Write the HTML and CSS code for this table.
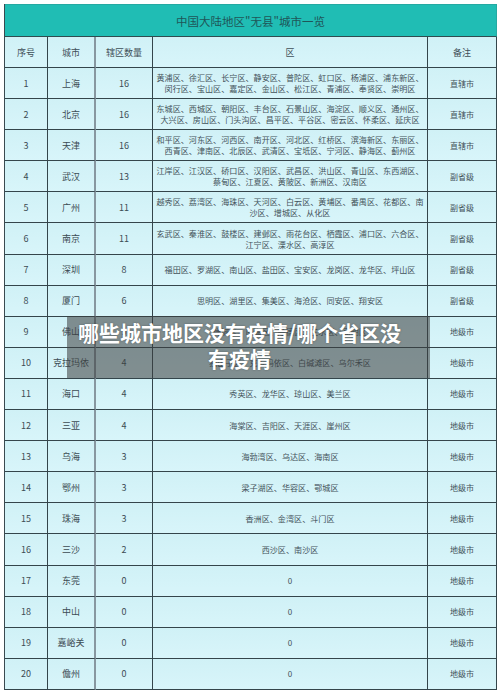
FILE: index.html
```html
<!DOCTYPE html>
<html lang="zh-CN">
<head>
<meta charset="utf-8">
<title>中国大陆地区"无县"城市一览</title>
<link rel="stylesheet" href="styles.css">
</head>
<body>
<div class="wrap">
  <div class="tbl">
    <div class="title">中国大陆地区"无县"城市一览</div>
    <div class="c h">序号</div><div class="c h c2">城市</div><div class="c h">辖区数量</div><div class="c h">区</div><div class="c h">备注</div>

    <div class="c">1</div><div class="c c2">上海</div><div class="c">16</div><div class="c d">黄浦区、徐汇区、长宁区、静安区、普陀区、虹口区、杨浦区、浦东新区、闵行区、宝山区、嘉定区、金山区、松江区、青浦区、奉贤区、崇明区</div><div class="c n">直辖市</div>
    <div class="c">2</div><div class="c c2">北京</div><div class="c">16</div><div class="c d">东城区、西城区、朝阳区、丰台区、石景山区、海淀区、顺义区、通州区、大兴区、房山区、门头沟区、昌平区、平谷区、密云区、怀柔区、延庆区</div><div class="c n">直辖市</div>
    <div class="c">3</div><div class="c c2">天津</div><div class="c">16</div><div class="c d">和平区、河东区、河西区、南开区、河北区、红桥区、滨海新区、东丽区、西青区、津南区、北辰区、武清区、宝坻区、宁河区、静海区、蓟州区</div><div class="c n">直辖市</div>
    <div class="c">4</div><div class="c c2">武汉</div><div class="c">13</div><div class="c d">江岸区、江汉区、硚口区、汉阳区、武昌区、洪山区、青山区、东西湖区、蔡甸区、江夏区、黄陂区、新洲区、汉南区</div><div class="c n">副省级</div>
    <div class="c">5</div><div class="c c2">广州</div><div class="c">11</div><div class="c d">越秀区、荔湾区、海珠区、天河区、白云区、黄埔区、番禺区、花都区、南沙区、增城区、从化区</div><div class="c n">副省级</div>
    <div class="c">6</div><div class="c c2">南京</div><div class="c">11</div><div class="c d">玄武区、秦淮区、鼓楼区、建邺区、雨花台区、栖霞区、浦口区、六合区、江宁区、溧水区、高淳区</div><div class="c n">副省级</div>
    <div class="c">7</div><div class="c c2">深圳</div><div class="c">8</div><div class="c d">福田区、罗湖区、南山区、盐田区、宝安区、龙岗区、龙华区、坪山区</div><div class="c n">副省级</div>
    <div class="c">8</div><div class="c c2">厦门</div><div class="c">6</div><div class="c d">思明区、湖里区、集美区、海沧区、同安区、翔安区</div><div class="c n">副省级</div>
    <div class="c">9</div><div class="c c2">佛山</div><div class="c">5</div><div class="c d">禅城区、南海区、顺德区、三水区、高明区</div><div class="c n">地级市</div>
    <div class="c">10</div><div class="c c2">克拉玛依</div><div class="c">4</div><div class="c d">独山子区、克拉玛依区、白碱滩区、乌尔禾区</div><div class="c n">地级市</div>
    <div class="c">11</div><div class="c c2">海口</div><div class="c">4</div><div class="c d">秀英区、龙华区、琼山区、美兰区</div><div class="c n">地级市</div>
    <div class="c">12</div><div class="c c2">三亚</div><div class="c">4</div><div class="c d">海棠区、吉阳区、天涯区、崖州区</div><div class="c n">地级市</div>
    <div class="c">13</div><div class="c c2">乌海</div><div class="c">3</div><div class="c d">海勃湾区、乌达区、海南区</div><div class="c n">地级市</div>
    <div class="c">14</div><div class="c c2">鄂州</div><div class="c">3</div><div class="c d">梁子湖区、华容区、鄂城区</div><div class="c n">地级市</div>
    <div class="c">15</div><div class="c c2">珠海</div><div class="c">3</div><div class="c d">香洲区、金湾区、斗门区</div><div class="c n">地级市</div>
    <div class="c">16</div><div class="c c2">三沙</div><div class="c">2</div><div class="c d">西沙区、南沙区</div><div class="c n">地级市</div>
    <div class="c">17</div><div class="c c2">东莞</div><div class="c">0</div><div class="c d">0</div><div class="c n">地级市</div>
    <div class="c">18</div><div class="c c2">中山</div><div class="c">0</div><div class="c d">0</div><div class="c n">地级市</div>
    <div class="c">19</div><div class="c c2">嘉峪关</div><div class="c">0</div><div class="c d">0</div><div class="c n">地级市</div>
    <div class="c">20</div><div class="c c2">儋州</div><div class="c">0</div><div class="c d">0</div><div class="c n">地级市</div>
  </div>
  <div class="overlay">哪些城市地区没有疫情/哪个省区没有疫情</div>
</div>
</body>
</html>
```

FILE: styles.css
```css
* { box-sizing: border-box; }
html, body { margin: 0; padding: 0; background: #ffffff; }
body {
  padding: 4px 0 0 4px;
  font-family: "Noto Sans CJK SC", "Noto Sans", sans-serif;
  color: #3c4b53;
}
.wrap { position: relative; width: 493px; }
.tbl {
  display: grid;
  grid-template-columns: 43px 48px 57px 275px 69px;
  grid-template-rows: 33px 31px;
  grid-auto-rows: 31.1px;
  border-left: 1px solid #3a4a50;
  background: #d4f3f8;
}
.title {
  grid-column: 1 / -1;
  background: #20bdb4;
  border-top: 1px solid #25a9a2;
  border-right: 1px solid #25a9a2;
  border-bottom: 1px solid #2f4b4f;
  color: #1f5658;
  font-size: 11.5px;
  display: flex;
  align-items: center;
  justify-content: center;
}
.c {
  border-right: 1px solid #34454b;
  border-bottom: 1px solid #34454b;
  display: flex;
  align-items: center;
  justify-content: center;
  text-align: center;
  font-size: 9px;
  line-height: 11px;
  background: linear-gradient(#d0f1f6, #d8f5fa);
}
.c2 { border-right: 2px solid #8797a0; }
.h { color: #3f4f57; }
.d {
  font-size: 8.1px;
  line-height: 11px;
  padding: 0 2px;
  color: #43525a;
}
.n { font-size: 8px; color: #43525a; }
.overlay {
  position: absolute;
  left: 63px;
  top: 312px;
  width: 363px;
  height: 62px;
  padding: 3px 26px 0 8px;
  background: rgba(60, 62, 62, 0.56);
  color: #ffffff;
  font-weight: 700;
  font-size: 21px;
  line-height: 26px;
  text-align: center;
  text-shadow: 0 0 2px rgba(0, 0, 0, 0.35);
}
```
